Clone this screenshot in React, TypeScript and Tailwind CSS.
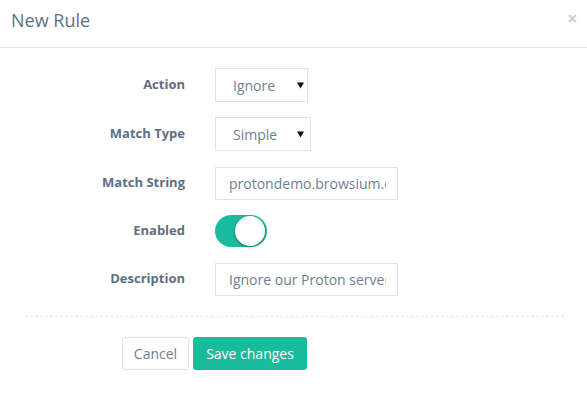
import React from "react";

const font = { fontFamily: '"Open Sans", "Noto Sans", sans-serif' };

function Caret() {
  return (
    <svg width="7" height="7" viewBox="0 0 7 7" className="shrink-0">
      <path d="M0 0.5 H7 L3.5 6.5 Z" fill="#111" />
    </svg>
  );
}

function Row({ label, children }: { label: string; children: React.ReactNode }) {
  return (
    <div className="flex items-center h-[34px]">
      <div className="w-[185px] text-right text-[13px] font-bold text-[#5e6f80]">{label}</div>
      <div className="ml-[30px] flex items-center">{children}</div>
    </div>
  );
}

function Select({ value, width }: { value: string; width: string }) {
  return (
    <div className={`${width} h-[34px] border border-[#e2e2e2] bg-white flex items-center pl-[17px] relative`}>
      <span className="text-[14px] text-[#6e7f91]">{value}</span>
      <span className="absolute left-[81px] top-[13px]">
        <Caret />
      </span>
    </div>
  );
}

function TextInput({ value }: { value: string }) {
  return (
    <input
      readOnly
      value={value}
      className="w-[183px] h-[33px] border border-[#e2e2e2] bg-white pl-[13px] pr-[11px] text-[14px] text-[#6e7f91] outline-none"
      style={font}
    />
  );
}

export default function App() {
  return (
    <div className="w-[587px] h-[404px] bg-white overflow-hidden" style={font}>
      <div className="h-[48px] border-b border-[#e5e5e5] flex items-start justify-between pl-[11px] pr-[10px]">
        <div className="pt-[8px] text-[18px] leading-[25px] text-[#5c7084]">New Rule</div>
        <svg width="9" height="9" viewBox="0 0 9 9" className="mt-[14px]">
          <path d="M1 1 L8 8 M8 1 L1 8" stroke="#cfcfcf" strokeWidth="2" />
        </svg>
      </div>
      <div className="pt-[20px] flex flex-col gap-[15px]">
        <Row label="Action">
          <Select value="Ignore" width="w-[93px]" />
        </Row>
        <Row label="Match Type">
          <Select value="Simple" width="w-[96px]" />
        </Row>
        <Row label="Match String">
          <TextInput value="protondemo.browsium.com" />
        </Row>
        <div className="flex items-center h-[32px]">
          <div className="w-[185px] text-right text-[13px] font-bold text-[#5e6f80]">Enabled</div>
          <div className="ml-[30px] w-[52px] h-[32px] rounded-full bg-[#1abb9c] flex items-center justify-end pr-[2px]">
            <div className="w-[30px] h-[30px] rounded-full bg-white shadow-[0_1px_3px_rgba(0,0,0,0.4)]" />
          </div>
        </div>
        <Row label="Description">
          <TextInput value="Ignore our Proton servers" />
        </Row>
      </div>
      <div className="mt-[20px] ml-[25px] w-[539px] border-t border-dashed border-[#e5e5e5]" />
      <div className="mt-[20px] ml-[122px] flex gap-[4px]">
        <button className="w-[67px] h-[33px] border border-[#e0e0e0] rounded-[3px] bg-white text-[14px] text-[#6e7f91]">
          Cancel
        </button>
        <button className="w-[114px] h-[33px] rounded-[3px] bg-[#1abb9c] text-[14px] text-white">
          Save changes
        </button>
      </div>
    </div>
  );
}
